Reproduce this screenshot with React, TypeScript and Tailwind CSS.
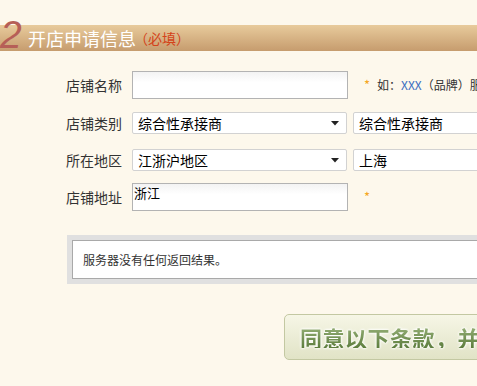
import React from "react";

const cjk = { fontFamily: '"Noto Sans CJK SC", "Liberation Sans", sans-serif' };

function Arrow() {
  return (
    <svg width="8" height="5" viewBox="0 0 8 5" className="shrink-0">
      <path d="M0 0 H8 L4 4.5 Z" fill="#222" />
    </svg>
  );
}

function Select({ text, w }: { text: string; w: string }) {
  return (
    <div className={`flex h-[22px] items-center justify-between rounded-[2px] border border-[#d2d2d2] bg-white pl-[5px] pr-[7px] ${w}`}>
      <span className="text-[14px] leading-none text-black">{text}</span>
      <Arrow />
    </div>
  );
}

export default function App() {
  return (
    <div className="relative h-[386px] w-[477px] overflow-hidden bg-[#fdf8ec]" style={cjk}>
      {/* header band */}
      <div className="mt-[25px] flex h-[26px] items-center bg-gradient-to-b from-[#e8cb9c] to-[#c69c6e]">
        <span
          className="relative -top-[4px] w-[22px] shrink-0 text-[39px] italic leading-none text-[#b65f57]"
          style={{ fontFamily: '"Liberation Sans", Arial, sans-serif' }}
        >
          2
        </span>
        <span className="ml-[6px] text-[18px] leading-none text-white">开店申请信息</span>
        <span className="-ml-[2px] whitespace-nowrap text-[14px] leading-none text-[#d4431a]">（必填）</span>
      </div>

      {/* form */}
      <div className="flex flex-col pl-[66px] text-[14px] text-[#333]">
        <div className="mt-[20px] flex h-[28px] items-center">
          <span className="w-[66px] shrink-0">店铺名称</span>
          <div className="h-[28px] w-[216px] shrink-0 border border-[#b3b3b3] bg-gradient-to-b from-[#f3f3f3] to-white to-[40%]" />
          <span className="ml-[16px] shrink-0 text-[13px] text-[#f5a623]">*</span>
          <span className="ml-[7px] shrink-0 whitespace-nowrap text-[12px] text-[#333]">
            如：<span className="text-[#3a6cc0]">XXX</span>（品牌）服
          </span>
        </div>

        <div className="mt-[13px] flex h-[22px] items-center">
          <span className="w-[66px] shrink-0">店铺类别</span>
          <Select text="综合性承接商" w="w-[215px] shrink-0" />
          <div className="ml-[6px] shrink-0">
            <Select text="综合性承接商" w="w-[180px]" />
          </div>
        </div>

        <div className="mt-[15px] flex h-[22px] items-center">
          <span className="w-[66px] shrink-0">所在地区</span>
          <Select text="江浙沪地区" w="w-[215px] shrink-0" />
          <div className="ml-[6px] shrink-0">
            <Select text="上海" w="w-[180px]" />
          </div>
        </div>

        <div className="mt-[12px] flex h-[28px] items-center">
          <span className="w-[66px] shrink-0">店铺地址</span>
          <div className="h-[28px] w-[216px] shrink-0 border border-[#b3b3b3] bg-gradient-to-b from-[#f3f3f3] to-white to-[40%] pl-[1px] pt-[2px] text-[13px] leading-[14px] text-black">
            浙江
          </div>
          <span className="ml-[16px] shrink-0 text-[13px] text-[#f5a623]">*</span>
        </div>
      </div>

      {/* message box */}
      <div className="ml-[67px] mt-[24px] w-[440px] bg-[#e0e0e0] p-[5px]">
        <div className="flex h-[39px] items-center border border-[#a9a9a9] bg-white pl-[10px] text-[12px] text-[#333]">
          服务器没有任何返回结果。
        </div>
      </div>

      {/* button */}
      <div className="ml-[284px] mt-[30px] flex h-[46px] w-[260px] items-center rounded-[5px] border border-[#c3c8a2] bg-gradient-to-b from-[#f6f6e6] to-[#e1e3c6] pl-[15px]">
        <span
          className="whitespace-nowrap bg-gradient-to-b from-[#96b077] to-[#5d7d3d] bg-clip-text text-[22px] font-bold leading-none tracking-[0.5px] text-transparent"
          style={{ filter: "drop-shadow(0 0 1px #fff) drop-shadow(0 0 1px #fff)" }}
        >
          同意以下条款，并提交
        </span>
      </div>
    </div>
  );
}
